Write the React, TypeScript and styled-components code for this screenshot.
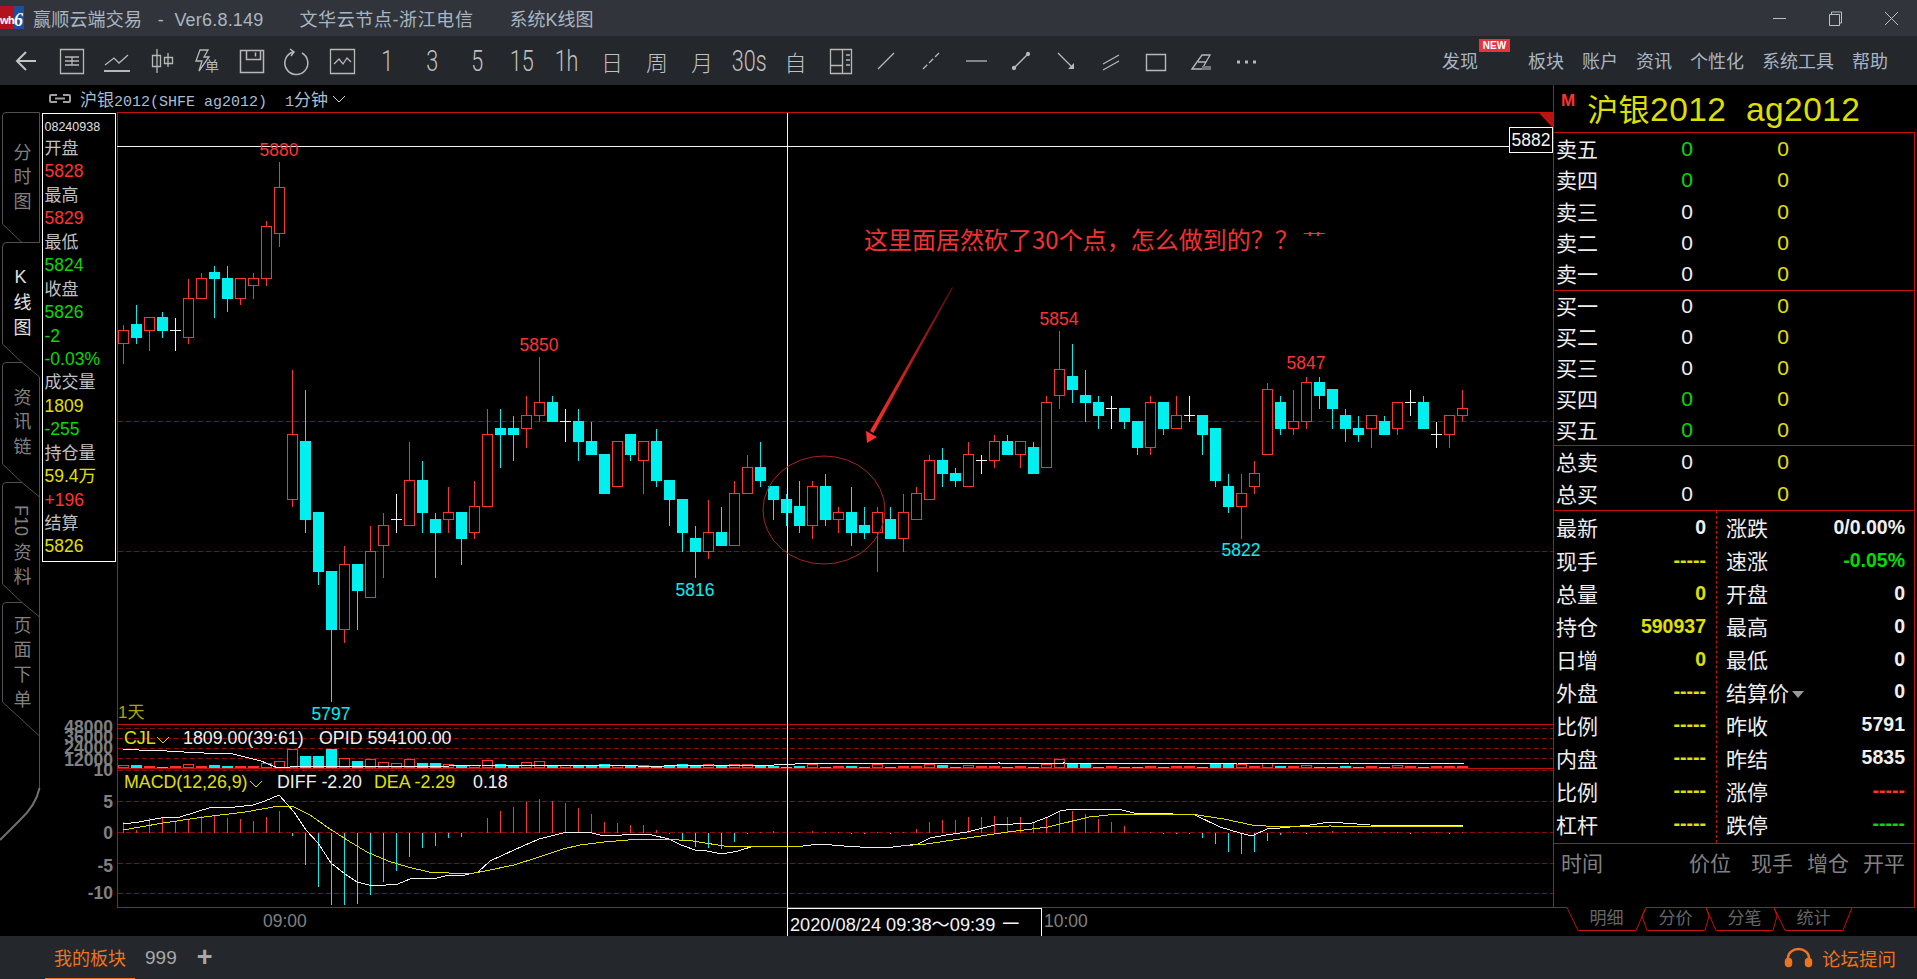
import React from 'react';
import styled, { createGlobalStyle } from 'styled-components';

const SANS = '"Liberation Sans", "Noto Sans CJK SC", sans-serif';
const RED = '#ff3232';
const CYAN = '#00f0f0';
const GREEN = '#00dc00';
const YELLOW = '#e0e000';
const FRAME = '#c4100c';
const GRID = '#8a0c0c';

type Tone = 'red' | 'green' | 'yellow' | 'white' | 'cyan' | 'gray';
const tones: Record<Tone, string> = {
  red: RED,
  green: GREEN,
  yellow: YELLOW,
  white: '#f0f0f0',
  cyan: CYAN,
  gray: '#808080',
};

const GlobalStyle = createGlobalStyle`
  html, body {
    margin: 0;
    height: 100%;
    background: #000;
    overflow: hidden;
    font-family: ${SANS};
  }
  #root {
    height: 100%;
  }
`;

const Screen = styled.div`
  display: flex;
  flex-direction: column;
  width: 1917px;
  height: 979px;
`;

const TitleBar = styled.header`
  display: flex;
  align-items: center;
  flex: 0 0 36px;
  background: #31353b;
  color: #a9b5c2;
  font-size: 18px;
`;

const Logo = styled.div`
  display: flex;
  align-items: flex-end;
  width: 24px;
  height: 23px;
  margin: 0 9px 1px 0;
  background: linear-gradient(90deg, #b3121c 0 60%, #1c4f9c 60%);
  color: #fff;
  font-weight: 700;
  line-height: 17px;
`;

const LogoWh = styled.span`
  font-size: 11px;
  letter-spacing: -0.6px;
`;

const LogoSix = styled.span`
  font-size: 18px;
  font-style: italic;
  font-family: "Liberation Serif", serif;
`;

const TitleGroup = styled.div`
  display: flex;
  gap: 36px;
  white-space: pre;
`;

const TitleVersion = styled.span`
  letter-spacing: 0.2px;
`;

const TitleNode = styled.span`
  letter-spacing: 0.6px;
`;

const WindowControls = styled.div`
  display: flex;
  gap: 41px;
  margin-left: auto;
  margin-right: 18px;
`;

const Toolbar = styled.nav`
  display: flex;
  align-items: center;
  flex: 0 0 49px;
  padding-left: 4.5px;
  background: #24272c;
`;

const ToolButton = styled.div`
  display: flex;
  align-items: center;
  justify-content: center;
  flex: 0 0 45px;
  height: 49px;
  color: #c0c0c0;
`;

const ToolGlyph = styled.span`
  display: inline-block;
  font-family: Roboto, "Noto Sans CJK SC", sans-serif;
  font-weight: 300;
  font-size: 30px;
  line-height: 30px;
  transform: scaleX(0.72);
  white-space: nowrap;
`;

const ToolGlyphCjk = styled.span`
  font-family: "Noto Sans CJK SC", sans-serif;
  font-weight: 200;
  font-size: 22px;
`;

const MainMenu = styled.div`
  display: flex;
  align-items: center;
  gap: 18px;
  margin-left: auto;
  margin-right: 29px;
  margin-top: -2px;
  color: #a9b5c2;
  font-size: 18px;
`;

const MenuItem = styled.span<{ $badge?: boolean }>`
  position: relative;
  padding-right: ${(p) => (p.$badge ? '32px' : '0')};
`;

const NewBadge = styled.span`
  position: absolute;
  left: 37px;
  top: -8px;
  width: 31px;
  height: 13px;
  background: #e8333f;
  color: #fff;
  font-size: 10px;
  font-weight: 700;
  line-height: 13px;
  text-align: center;
`;

const Main = styled.main`
  display: flex;
  flex: 1;
  min-height: 0;
  background: #000;
`;

const TabRail = styled.aside`
  position: relative;
  display: flex;
  flex-direction: column;
  flex: 0 0 41px;
  padding-top: 27px;
  box-sizing: border-box;
`;

const RailOutline = styled.svg`
  position: absolute;
  left: 0;
  top: 0;
`;

const RailTab = styled.div<{ $active?: boolean; $height: number }>`
  position: relative;
  display: flex;
  align-items: center;
  justify-content: center;
  width: 41px;
  height: ${(p) => p.$height}px;
  box-sizing: border-box;
  padding-top: 6.6px;
  color: ${(p) => (p.$active ? '#e0e0e0' : '#808080')};
  font-size: 18px;
  line-height: 18px;
  letter-spacing: 6.6px;
  writing-mode: vertical-rl;
  text-orientation: ${(p) => (p.$active ? 'upright' : 'mixed')};
`;

const RailLatin = styled.span`
  margin-bottom: 7px;
  letter-spacing: 0;
`;

const ChartColumn = styled.section`
  display: flex;
  flex-direction: column;
  flex: 0 0 1512px;
`;

const ContractRow = styled.div`
  display: flex;
  align-items: center;
  flex: 0 0 27px;
  padding-left: 7px;
  color: #a9bdd0;
  font-family: "Liberation Mono", "Noto Sans CJK SC", monospace;
  font-size: 15px;
`;

const ContractCjk = styled.span`
  font-family: "Noto Sans CJK SC", sans-serif;
  font-size: 17px;
`;

const ContractName = styled.span`
  margin-left: 8px;
`;

const ContractPeriod = styled.span`
  display: flex;
  align-items: center;
  margin-left: 18px;
  gap: 4px;
`;

const ChartStage = styled.div`
  position: relative;
  flex: 1;
`;

const ChartSvg = styled.svg`
  display: block;
`;

const DataWindow = styled.div`
  position: absolute;
  left: 1px;
  top: 1px;
  width: 74px;
  height: 449px;
  box-sizing: border-box;
  padding: 2px 0 0 1.5px;
  border: 1px solid #fff;
  background: #000;
`;

const DataStamp = styled.div`
  height: 21px;
  color: #e0e0e0;
  font-size: 12.5px;
  line-height: 23px;
`;

const DataRow = styled.div<{ $tone?: Tone }>`
  height: 23.45px;
  color: ${(p) => (p.$tone ? tones[p.$tone] : '#c0c0c0')};
  font-size: ${(p) => (p.$tone ? '17.5px' : '17px')};
  line-height: 23.45px;
  white-space: nowrap;
`;

const PriceTag = styled.div`
  position: absolute;
  right: 0;
  top: 15px;
  width: 44px;
  height: 26px;
  box-sizing: border-box;
  border: 1px solid #fff;
  background: #000;
  color: #f4f4f4;
  font-size: 17.5px;
  line-height: 24px;
  text-align: center;
`;

const DateTag = styled.div`
  position: absolute;
  left: 746px;
  top: 796px;
  display: flex;
  align-items: center;
  width: 255px;
  height: 28px;
  box-sizing: border-box;
  padding-left: 2px;
  border: 1px solid #fff;
  border-bottom: none;
  background: #000;
  color: #f4f4f4;
  font-size: 18.2px;
  white-space: pre;
`;

const DateArrow = styled.span`
  margin-left: 7px;
  font-size: 17px;
`;

const Mark = styled.text<{ $tone: Tone }>`
  fill: ${(p) => tones[p.$tone]};
  font-family: ${SANS};
  font-size: 17.5px;
  text-anchor: middle;
`;

const AxisLabel = styled.text`
  fill: #808080;
  font-family: ${SANS};
  font-size: 17.5px;
  font-weight: 700;
  text-anchor: end;
`;

const LegendText = styled.text<{ $tone: Tone }>`
  fill: ${(p) => tones[p.$tone]};
  font-family: ${SANS};
  font-size: 17.8px;
`;

const TimeLabel = styled.text`
  fill: #808080;
  font-family: ${SANS};
  font-size: 17.5px;
`;

const Annotation = styled.text`
  fill: #f03232;
  font-family: "Noto Sans CJK SC", sans-serif;
  font-size: 24px;
`;

const PeriodLabel = styled.text`
  fill: #a8a800;
  font-family: ${SANS};
  font-size: 17px;
`;

const QuotePanel = styled.aside`
  display: flex;
  flex-direction: column;
  flex: 0 0 364px;
  box-sizing: border-box;
  padding-right: 2px;
  padding-bottom: 5px;
`;

const QuoteHeader = styled.div`
  display: flex;
  flex: 0 0 47px;
  box-sizing: border-box;
  padding-top: 4px;
  border-left: 1px solid ${FRAME};
`;

const MarketFlag = styled.span`
  margin: 3px 12px 0 7px;
  color: ${RED};
  font-size: 17px;
  font-weight: 700;
  line-height: 17px;
`;

const QuoteTitle = styled.span`
  color: #dede00;
  font-size: 33.5px;
  letter-spacing: 0.45px;
  line-height: 42px;
  white-space: pre;
`;

const QuoteTitleCjk = styled.span`
  font-size: 31px;
`;

const QuoteBody = styled.div`
  display: flex;
  flex-direction: column;
  height: 775px;
  box-sizing: border-box;
  border: 1px solid ${FRAME};
  border-bottom: none;
  color: #eee;
`;

const OrderSection = styled.div<{ $height: number }>`
  display: flex;
  flex-direction: column;
  flex: 0 0 ${(p) => p.$height}px;
  box-sizing: border-box;
  border-bottom: 1px solid ${FRAME};
`;

const OrderRow = styled.div`
  display: grid;
  grid-template-columns: 118px 26px 70px 26px;
  align-items: center;
  flex: 1;
  padding-left: 2px;
  font-size: 21px;
`;

const OrderLabel = styled.span`
  position: relative;
  top: -1px;
`;

const OrderValue = styled.span<{ $tone: Tone }>`
  color: ${(p) => tones[p.$tone]};
  text-align: center;
`;

const Stats = styled.div`
  display: grid;
  grid-template-columns: 163px 1fr;
  flex: 0 0 333px;
  box-sizing: border-box;
  border-bottom: 1px solid ${FRAME};
`;

const StatsColumn = styled.div<{ $left?: boolean }>`
  display: flex;
  flex-direction: column;
  padding: ${(p) => (p.$left ? '0 10px 3px 2px' : '0 9px 3px 9px')};
  border-right: ${(p) => (p.$left ? `1px dashed ${FRAME}` : 'none')};
`;

const StatRow = styled.div`
  display: flex;
  align-items: center;
  justify-content: space-between;
  flex: 1;
  font-size: 21px;
`;

const StatLabel = styled.span`
  display: flex;
  align-items: center;
`;

const StatValue = styled.span<{ $tone: Tone }>`
  color: ${(p) => tones[p.$tone]};
  font-size: 19.5px;
  font-weight: 700;
`;

const Caret = styled.i`
  width: 0;
  height: 0;
  margin: 6px 0 0 3px;
  border-left: 6.5px solid transparent;
  border-right: 6.5px solid transparent;
  border-top: 7px solid #999;
`;

const TradeHeader = styled.div`
  display: flex;
  flex: 1;
  align-items: flex-start;
  padding: 3px 9px 0 7px;
  color: #808080;
  font-size: 21px;
`;

const TradeTime = styled.span`
  margin-right: auto;
`;

const TradeCell = styled.span<{ $gap: number }>`
  margin-left: ${(p) => p.$gap}px;
`;

const BookTabs = styled.div`
  position: relative;
  display: flex;
  flex: 0 0 24px;
  padding-left: 19px;
`;

const BookOutline = styled.svg`
  position: absolute;
  left: 0;
  top: 0;
`;

const BookTab = styled.span`
  position: relative;
  flex: 0 0 69px;
  color: #666;
  font-size: 17px;
  line-height: 23px;
  text-align: center;
`;

const StatusBar = styled.footer`
  display: flex;
  align-items: center;
  flex: 0 0 43px;
  background: #24272c;
  color: #a8a8a8;
  font-size: 18px;
`;

const BoardTab = styled.span`
  display: flex;
  align-items: center;
  justify-content: center;
  width: 90px;
  height: 41px;
  margin-left: 45px;
  border-bottom: 1px solid #ee7420;
  color: #ee7420;
`;

const BoardCount = styled.span`
  margin-left: 10px;
  font-size: 19px;
`;

const BoardAdd = styled.span`
  margin-left: 20px;
  font-size: 27px;
  font-weight: 700;
  line-height: 27px;
`;

const ForumLink = styled.span`
  display: flex;
  align-items: center;
  gap: 9px;
  margin-left: auto;
  margin-right: 21px;
  color: #ee7420;
  font-size: 18.5px;
`;

type Kind = 'r' | 'c' | 'w';
type Candle = [Kind, number, number, number, number];

// kind, body top, body bottom, high, low
const candles: Candle[] = [
  ['r', 5854, 5852, 5855, 5849], ['c', 5855, 5853, 5858, 5852], ['r', 5856, 5854, 5856, 5851],
  ['c', 5856, 5854, 5857, 5853], ['w', 5854, 5854, 5856, 5851], ['r', 5859, 5853, 5862, 5852],
  ['r', 5862, 5859, 5863, 5859], ['c', 5863, 5862, 5864, 5856], ['c', 5862, 5859, 5864, 5857],
  ['r', 5862, 5859, 5862, 5858], ['r', 5862, 5861, 5863, 5859], ['r', 5870, 5862, 5871, 5861],
  ['r', 5876, 5869, 5880, 5867], ['r', 5838, 5828, 5848, 5827], ['c', 5837, 5825, 5845, 5823],
  ['c', 5826, 5817, 5826, 5815], ['c', 5817, 5808, 5817, 5797], ['r', 5818, 5808, 5821, 5806],
  ['c', 5818, 5814, 5818, 5808], ['r', 5820, 5813, 5824, 5813], ['r', 5824, 5821, 5826, 5816],
  ['w', 5825, 5825, 5829, 5823], ['r', 5831, 5824, 5837, 5824], ['c', 5831, 5826, 5834, 5823],
  ['c', 5825, 5823, 5826, 5816], ['r', 5826, 5825, 5830, 5823], ['c', 5826, 5822, 5826, 5818],
  ['r', 5827, 5823, 5831, 5822], ['r', 5838, 5827, 5842, 5827], ['c', 5839, 5838, 5842, 5833],
  ['c', 5839, 5838, 5841, 5834], ['r', 5841, 5839, 5844, 5836], ['r', 5843, 5841, 5850, 5840],
  ['c', 5843, 5840, 5844, 5840], ['w', 5840, 5840, 5842, 5837], ['c', 5840, 5837, 5842, 5834],
  ['c', 5837, 5835, 5840, 5835], ['c', 5835, 5829, 5835, 5829], ['r', 5837, 5830, 5837, 5830],
  ['c', 5838, 5835, 5838, 5834], ['r', 5837, 5834, 5837, 5829], ['c', 5837, 5831, 5839, 5830],
  ['c', 5831, 5828, 5831, 5824], ['c', 5828, 5823, 5828, 5820], ['c', 5822, 5820, 5824, 5816],
  ['r', 5823, 5820, 5828, 5819], ['c', 5823, 5821, 5827, 5821], ['r', 5829, 5821, 5831, 5821],
  ['r', 5833, 5829, 5835, 5829], ['c', 5833, 5831, 5837, 5830], ['c', 5830, 5828, 5830, 5825],
  ['c', 5828, 5826, 5829, 5824], ['c', 5827, 5824, 5831, 5823], ['r', 5830, 5824, 5831, 5822],
  ['c', 5830, 5825, 5832, 5824], ['r', 5826, 5825, 5827, 5823], ['c', 5826, 5823, 5830, 5821],
  ['c', 5824, 5823, 5827, 5822], ['r', 5826, 5823, 5827, 5817], ['c', 5825, 5822, 5827, 5822],
  ['r', 5826, 5822, 5829, 5820], ['r', 5829, 5825, 5830, 5825], ['r', 5834, 5828, 5835, 5828],
  ['c', 5834, 5832, 5836, 5830], ['c', 5832, 5831, 5833, 5830], ['r', 5835, 5830, 5837, 5830],
  ['w', 5834, 5834, 5835, 5832], ['r', 5837, 5834, 5838, 5833], ['c', 5837, 5835, 5838, 5835],
  ['r', 5837, 5835, 5837, 5833], ['c', 5836, 5832, 5837, 5832], ['r', 5843, 5833, 5844, 5833],
  ['r', 5848, 5844, 5854, 5842], ['c', 5847, 5845, 5852, 5843], ['c', 5844, 5843, 5848, 5840],
  ['c', 5843, 5841, 5844, 5839], ['w', 5842, 5842, 5844, 5839], ['c', 5842, 5840, 5842, 5839],
  ['c', 5840, 5836, 5840, 5835], ['r', 5843, 5836, 5844, 5835], ['c', 5843, 5839, 5843, 5838],
  ['r', 5841, 5839, 5844, 5839], ['w', 5841, 5841, 5844, 5840], ['c', 5841, 5838, 5841, 5835],
  ['c', 5839, 5831, 5839, 5830], ['c', 5830, 5827, 5832, 5826], ['r', 5829, 5827, 5832, 5822],
  ['r', 5832, 5830, 5834, 5829], ['r', 5845, 5835, 5846, 5835], ['c', 5843, 5839, 5844, 5838],
  ['r', 5840, 5839, 5845, 5838], ['r', 5846, 5840, 5847, 5839], ['c', 5846, 5844, 5847, 5842],
  ['c', 5845, 5842, 5845, 5839], ['c', 5841, 5839, 5842, 5837], ['c', 5839, 5838, 5841, 5837],
  ['r', 5841, 5839, 5841, 5836], ['c', 5840, 5838, 5841, 5838], ['r', 5843, 5839, 5843, 5838],
  ['w', 5843, 5843, 5845, 5841], ['c', 5843, 5839, 5844, 5839], ['w', 5838, 5838, 5840, 5836],
  ['r', 5841, 5838, 5841, 5836], ['r', 5842, 5841, 5845, 5840],
];

const volumes = [
  2, 3, 1, 1, 1, 3, 1, 3, 2, 1, 1, 4, 6, 18, 12, 12, 19, 9, 7, 8, 5, 4, 8, 5, 5, 3, 3, 2, 7, 4, 3, 5, 6, 3, 2, 3,
  3, 4, 2, 2, 2, 2, 3, 4, 3, 3, 3, 3, 3, 2, 2, 1, 2, 3, 1, 1, 2, 1, 3, 1, 1, 1, 3, 3, 1, 2, 1, 1, 1, 1, 1, 3, 8, 4,
  4, 1, 1, 1, 1, 1, 1, 1, 1, 1, 4, 4, 3, 1, 4, 2, 1, 2, 1, 1, 2, 1, 1, 1, 2, 1, 1, 1, 1, 1,
];

const macdBars = [
  11, 3, 15, 15, 12, 14, 17, 18, 15, 14, 12, 16, 22, -3, -32, -54, -72, -72, -71, -62, -49, -38, -24, -15, -13, -5,
  -4, 0, 15, 22, 26, 31, 34, 32, 30, 25, 19, 11, 10, 8, 8, 3, -1, -8, -14, -15, -16, -9, -1, 1, 2, 0, 1, 2, 1, 1, -1,
  -1, 1, -1, 1, 4, 11, 13, 13, 16, 16, 17, 16, 16, 11, 16, 22, 22, 19, 14, 11, 7, 1, 1, -1, -1, -1, -5, -11, -19, -21,
  -19, -8, -2, 1, -1, 1, 2, 1, 1, 1, 1, 1, -1, 1, 1, -1, 1,
];

const candleX = (i: number) => 123.5 + 13 * i;
const priceY = (p: number) => Math.round(421 + (5840 - p) * 6.5) + 0.5;

// traced line points, page x / y
const opidLine =
  '123,749 139,750 167,751 184,752 204,753 233,754 245,757 261,761 273,766 278,768 302,766 449,766 482,765 510,765 ' +
  '572,765 636,765 640,767 664,766 681,765 701,766 713,765 754,766 795,764 895,763 921,763 922,763 934,764 999,763 ' +
  '1032,764 1064,763 1118,764 1142,763 1207,763 1237,763 1277,764 1350,763 1464,764';
const diffLine =
  '123,824 139,822 161,818 180,817 212,807 235,807 253,805 265,801 279,795 294,812 306,830 318,843 331,863 345,874 ' +
  '357,882 369,885 386,885 398,884 410,879 437,878 449,875 465,875 478,872 490,861 514,850 539,839 563,833 580,832 ' +
  '592,833 604,836 640,834 652,835 669,839 681,845 695,850 707,851 722,854 738,851 754,846 803,846 820,844 844,846 ' +
  '860,847 893,847 918,844 930,838 946,835 967,832 995,825 1032,823 1048,817 1060,811 1073,809 1118,809 1134,813 ' +
  '1150,813 1195,815 1220,827 1240,833 1252,836 1267,829 1280,828 1310,825 1330,822 1370,825 1420,826 1464,825';
const deaLine =
  '123,830 163,823 204,817 245,812 279,806 294,807 310,815 327,827 347,840 367,852 388,861 408,867 429,872 449,873 ' +
  '469,874 490,870 514,865 539,857 563,849 580,845 604,842 640,839 664,839 693,841 730,847 803,846 901,846 926,844 ' +
  '967,838 1008,832 1048,827 1089,817 1118,814 1191,814 1224,819 1252,825 1280,827 1330,826 1400,827 1464,826';

const Candles: React.FC = () => (
  <g shapeRendering="crispEdges">
    {candles.map(([kind, top, bottom, high, low], i) => {
      const x = candleX(i);
      const color = kind === 'r' ? RED : kind === 'c' ? CYAN : '#f0f0f0';
      const yTop = priceY(top);
      const yBottom = priceY(bottom);
      return (
        <g key={i}>
          <line x1={x} x2={x} y1={priceY(high)} y2={priceY(low)} stroke={color} />
          {kind === 'r' && <rect x={x - 5} y={yTop} width={10} height={yBottom - yTop} fill="#000" stroke={color} />}
          {kind === 'c' && <rect x={x - 5.5} y={yTop - 0.5} width={11} height={yBottom - yTop + 1} fill={color} />}
          {kind === 'w' && <line x1={x - 5.5} x2={x + 5.5} y1={yTop} y2={yTop} stroke={color} />}
        </g>
      );
    })}
  </g>
);

const VolumeBars: React.FC = () => (
  <g shapeRendering="crispEdges">
    {volumes.map((h, i) => {
      const x = candleX(i);
      const kind = candles[i][0];
      return kind === 'c' ? (
        <rect key={i} x={x - 5.5} y={768 - h} width={11} height={h} fill={CYAN} />
      ) : (
        <rect key={i} x={x - 5} y={767.5 - h} width={10} height={h} fill="#000" stroke={RED} />
      );
    })}
  </g>
);

const MacdBars: React.FC = () => (
  <g shapeRendering="crispEdges">
    {macdBars.map((h, i) => (
      <line key={i} x1={candleX(i)} x2={candleX(i)} y1={832.5} y2={832.5 - h} stroke={h > 0 ? RED : CYAN} />
    ))}
  </g>
);

const Chevron: React.FC<{ x: number; y: number; color: string }> = ({ x, y, color }) => (
  <polyline points={`${x},${y} ${x + 6},${y + 6} ${x + 12},${y}`} fill="none" stroke={color} />
);

const PriceChart: React.FC = () => (
  <ChartSvg width={1512} height={824} viewBox="41 112 1512 824">
    <defs>
      <linearGradient id="arrowFade" x1="952" y1="287" x2="868" y2="442" gradientUnits="userSpaceOnUse">
        <stop offset="0" stopColor="#5a0c0c" />
        <stop offset="0.55" stopColor="#c02020" />
        <stop offset="1" stopColor="#ff3232" />
      </linearGradient>
    </defs>
    <g shapeRendering="crispEdges" stroke={GRID} strokeDasharray="5 3">
      {[421.5, 551.5, 728.5, 738.5, 748.5, 758.5, 770.5, 801.5, 832.5, 863.5, 893.5].map((y) => (
        <line key={y} x1={118} x2={1553} y1={y} y2={y} />
      ))}
    </g>
    <Candles />
    <VolumeBars />
    <MacdBars />
    <g shapeRendering="crispEdges" fill="none" strokeWidth={1}>
      <polyline points={opidLine} stroke="#f0f0f0" />
      <polyline points={diffLine} stroke="#f0f0f0" />
      <polyline points={deaLine} stroke={YELLOW} />
    </g>
    <g shapeRendering="crispEdges" stroke={FRAME}>
      <line x1={117} x2={1553} y1={112.5} y2={112.5} />
      <line x1={117.5} x2={117.5} y1={112} y2={907} />
      <line x1={117} x2={1553} y1={724.5} y2={724.5} />
      <line x1={117} x2={1553} y1={768.5} y2={768.5} />
      <line x1={117} x2={1553} y1={907.5} y2={907.5} />
    </g>
    <polygon points="1539,113 1553,113 1553,128" fill="#b81410" />
    <g shapeRendering="crispEdges" stroke="#f4f4f4">
      <line x1={787.5} x2={787.5} y1={113} y2={936} />
      <line x1={117} x2={1510} y1={146.5} y2={146.5} />
    </g>
    <ellipse cx={824} cy={510} rx={61} ry={54} fill="none" stroke="#a82424" />
    <polygon points="952,287 953,288 873.5,433 870,431" fill="url(#arrowFade)" />
    <polygon points="867,443 866,431 877,437" fill={RED} />
    <Annotation x={864} y={249}>这里面居然砍了30个点，怎么做到的？？</Annotation>
    <Annotation x={1302} y={484} transform="scale(1 0.5)">艹</Annotation>
    <Mark $tone="red" x={279} y={156}>5880</Mark>
    <Mark $tone="red" x={539} y={351}>5850</Mark>
    <Mark $tone="red" x={1059} y={325}>5854</Mark>
    <Mark $tone="red" x={1306} y={369}>5847</Mark>
    <Mark $tone="cyan" x={695} y={596}>5816</Mark>
    <Mark $tone="cyan" x={331} y={720}>5797</Mark>
    <Mark $tone="cyan" x={1241} y={556}>5822</Mark>
    <PeriodLabel x={118} y={718}>1天</PeriodLabel>
    <AxisLabel x={113} y={733}>48000</AxisLabel>
    <AxisLabel x={113} y={743}>36000</AxisLabel>
    <AxisLabel x={113} y={754}>24000</AxisLabel>
    <AxisLabel x={113} y={766}>12000</AxisLabel>
    <AxisLabel x={113} y={776}>10</AxisLabel>
    <AxisLabel x={113} y={808}>5</AxisLabel>
    <AxisLabel x={113} y={839}>0</AxisLabel>
    <AxisLabel x={113} y={872}>-5</AxisLabel>
    <AxisLabel x={113} y={899}>-10</AxisLabel>
    <LegendText $tone="yellow" x={124} y={744}>CJL</LegendText>
    <Chevron x={157} y={737} color={YELLOW} />
    <LegendText $tone="white" x={183} y={744}>1809.00(39:61)</LegendText>
    <LegendText $tone="white" x={319} y={744}>OPID 594100.00</LegendText>
    <LegendText $tone="yellow" x={124} y={788}>MACD(12,26,9)</LegendText>
    <Chevron x={250} y={781} color={YELLOW} />
    <LegendText $tone="white" x={277} y={788}>DIFF -2.20</LegendText>
    <LegendText $tone="yellow" x={374} y={788}>DEA -2.29</LegendText>
    <LegendText $tone="white" x={473} y={788}>0.18</LegendText>
    <TimeLabel x={263} y={927}>09:00</TimeLabel>
    <TimeLabel x={1044} y={927}>10:00</TimeLabel>
  </ChartSvg>
);

const Icon: React.FC<{ children: React.ReactNode }> = ({ children }) => (
  <svg width={30} height={30} viewBox="0 0 30 30" fill="none" stroke="#b8b8b8" strokeWidth={1.3}>
    {children}
  </svg>
);

const toolbarItems: React.ReactNode[] = [
  <Icon key="back"><path d="M24 15H6M14 6l-9 9 9 9" strokeWidth={2} stroke="#c4c4c4" /></Icon>,
  <Icon key="table"><path d="M3.500 3.500h23v24h-23zM8 11h14M8 15h14M8 19h14M15 11v8" /></Icon>,
  <Icon key="line"><path d="M2 25h26" strokeWidth={2} /><path d="M3 19l9-7 5 5 9-8" /></Icon>,
  <Icon key="candle"><path d="M10 3v24M5.500 9.500h8v11h-8zM21 7v14M17.500 11.500h8v6h-8z" /></Icon>,
  <Icon key="flash">
    <path d="M8 4h8l-4 7h5L7 25l3-10H4z" />
    <text x={13} y={25} fill="#b8b8b8" stroke="none" fontSize={14} fontFamily="Noto Sans CJK SC, sans-serif">单</text>
  </Icon>,
  <Icon key="save"><path d="M3.500 4.500h23v22h-23zM9.500 4.500v9h14v-9M18.500 6.500v4" strokeWidth={1.5} /></Icon>,
  <Icon key="refresh"><path d="M11 6a11.500 11.500 0 1 0 9 1M8 3l4 3-3 4" strokeWidth={1.5} /></Icon>,
  <Icon key="chart"><path d="M3.500 3.500h24v24h-24zM7 18l5-5 4 5 4-6 4 4" /></Icon>,
  <ToolGlyph key="1">1</ToolGlyph>,
  <ToolGlyph key="3">3</ToolGlyph>,
  <ToolGlyph key="5">5</ToolGlyph>,
  <ToolGlyph key="15">15</ToolGlyph>,
  <ToolGlyph key="1h">1h</ToolGlyph>,
  <ToolGlyphCjk key="day">日</ToolGlyphCjk>,
  <ToolGlyphCjk key="week">周</ToolGlyphCjk>,
  <ToolGlyphCjk key="month">月</ToolGlyphCjk>,
  <ToolGlyph key="30s">30s</ToolGlyph>,
  <ToolGlyphCjk key="auto">自</ToolGlyphCjk>,
  <Icon key="layout"><path d="M4.500 3.500h21v24h-21zM16.500 3.500v24M4.500 19.500h12M20 9h4M20 14h4M20 19h4" /></Icon>,
  <Icon key="segment"><path d="M7 23L23 7" /></Icon>,
  <Icon key="dash"><path d="M7 23L23 7" strokeDasharray="6 2.500" /></Icon>,
  <Icon key="hline"><path d="M5 15h21" /></Icon>,
  <Icon key="ray"><path d="M8 22L22 8" /><circle cx={8} cy={22} r={1.500} fill="#b8b8b8" /><circle cx={22} cy={8} r={1.500} fill="#b8b8b8" /></Icon>,
  <Icon key="arrow"><path d="M7 7l14 14" /><path d="M17 23h6v-6z" fill="#b8b8b8" stroke="none" /></Icon>,
  <Icon key="parallel"><path d="M7 18L23 9M7 24L23 15" /></Icon>,
  <Icon key="rect"><path d="M5.500 8.500h19v16h-19z" strokeWidth={1.400} /></Icon>,
  <Icon key="eraser">
    <path d="M6 23l10-14h8l-8 14zM6 23h10M12 16l8 0" />
    <path d="M16 20h9v4H16z" fill="#777" stroke="none" />
  </Icon>,
  <Icon key="more"><path d="M6 16h3M14 16h3M22 16h3" strokeWidth={3} /></Icon>,
];

const menuItems = ['板块', '账户', '资讯', '个性化', '系统工具', '帮助'];

const railTabs: { key: string; label: React.ReactNode; height: number; active?: boolean }[] = [
  { key: 'minute', label: '分时图', height: 130 },
  { key: 'kline', label: 'K线图', height: 120, active: true },
  { key: 'news', label: '资讯链', height: 120 },
  { key: 'f10', label: <><RailLatin>F10</RailLatin>资料</>, height: 126 },
  { key: 'order', label: '页面下单', height: 108 },
];

const dataRows: { text: string; tone?: Tone }[] = [
  { text: '开盘' },
  { text: '5828', tone: 'red' },
  { text: '最高' },
  { text: '5829', tone: 'red' },
  { text: '最低' },
  { text: '5824', tone: 'green' },
  { text: '收盘' },
  { text: '5826', tone: 'green' },
  { text: '-2', tone: 'green' },
  { text: '-0.03%', tone: 'green' },
  { text: '成交量' },
  { text: '1809', tone: 'yellow' },
  { text: '-255', tone: 'green' },
  { text: '持仓量' },
  { text: '59.4万', tone: 'yellow' },
  { text: '+196', tone: 'red' },
  { text: '结算' },
  { text: '5826', tone: 'yellow' },
];

const asks: [string, Tone][] = [['卖五', 'green'], ['卖四', 'green'], ['卖三', 'white'], ['卖二', 'white'], ['卖一', 'white']];
const bids: [string, Tone][] = [['买一', 'white'], ['买二', 'white'], ['买三', 'white'], ['买四', 'green'], ['买五', 'green']];
const totals: [string, Tone][] = [['总卖', 'white'], ['总买', 'white']];

const leftStats: [string, string, Tone][] = [
  ['最新', '0', 'white'],
  ['现手', '-----', 'yellow'],
  ['总量', '0', 'yellow'],
  ['持仓', '590937', 'yellow'],
  ['日增', '0', 'yellow'],
  ['外盘', '-----', 'yellow'],
  ['比例', '-----', 'yellow'],
  ['内盘', '-----', 'yellow'],
  ['比例', '-----', 'yellow'],
  ['杠杆', '-----', 'yellow'],
];

const rightStats: [string, string, Tone][] = [
  ['涨跌', '0/0.00%', 'white'],
  ['速涨', '-0.05%', 'green'],
  ['开盘', '0', 'white'],
  ['最高', '0', 'white'],
  ['最低', '0', 'white'],
  ['结算价', '0', 'white'],
  ['昨收', '5791', 'white'],
  ['昨结', '5835', 'white'],
  ['涨停', '-----', 'red'],
  ['跌停', '-----', 'green'],
];

const OrderRows: React.FC<{ rows: [string, Tone][] }> = ({ rows }) => (
  <>
    {rows.map(([label, tone]) => (
      <OrderRow key={label}>
        <OrderLabel>{label}</OrderLabel>
        <OrderValue $tone={tone}>0</OrderValue>
        <span />
        <OrderValue $tone="yellow">0</OrderValue>
      </OrderRow>
    ))}
  </>
);

const App: React.FC = () => (
  <>
    <GlobalStyle />
    <Screen>
      <TitleBar>
        <Logo>
          <LogoWh>wh</LogoWh>
          <LogoSix>6</LogoSix>
        </Logo>
        <TitleGroup>
          <TitleVersion>赢顺云端交易   -  Ver6.8.149</TitleVersion>
          <TitleNode>文华云节点-浙江电信</TitleNode>
          <span>系统K线图</span>
        </TitleGroup>
        <WindowControls>
          <svg width={15} height={15} viewBox="0 0 15 15" stroke="#b8c0c8" fill="none">
            <path d="M1 7.500h13" />
          </svg>
          <svg width={15} height={15} viewBox="0 0 15 15" stroke="#b8c0c8" fill="none">
            <path d="M1.500 3.500h10v11h-10zM3.500 3.500v-2.500h10v11h-2" />
          </svg>
          <svg width={15} height={15} viewBox="0 0 15 15" stroke="#b8c0c8" fill="none">
            <path d="M1 1l13 13M14 1L1 14" />
          </svg>
        </WindowControls>
      </TitleBar>

      <Toolbar>
        {toolbarItems.map((item, i) => (
          <ToolButton key={i}>{item}</ToolButton>
        ))}
        <MainMenu>
          <MenuItem $badge>
            发现
            <NewBadge>NEW</NewBadge>
          </MenuItem>
          {menuItems.map((name) => (
            <MenuItem key={name}>{name}</MenuItem>
          ))}
        </MainMenu>
      </Toolbar>

      <Main>
        <TabRail>
          <RailOutline width={41} height={851} viewBox="0 85 41 851" fill="none" stroke="#505050">
            <path d="M2.500 116Q2.500 112.500 6 112.500H39.500V242.500H22L2.500 224V116" />
            <path d="M39.500 242.500H6Q2.500 243 2.500 247V344L22 362.500H6Q2.500 362.500 2.500 366V464L22 482.500H6Q2.500 482.500 2.500 486V584L22 602.500H6Q2.500 602.500 2.500 606V702L39.500 736" />
            <path d="M22 362.500L39.500 377V788" />
            <path d="M22 482.500L39.500 497M22 602.500L39.500 617" />
            <path d="M39.500 788Q36 805 20 820L0 840" stroke="#707070" strokeWidth={2} />
          </RailOutline>
          {railTabs.map((tab) => (
            <RailTab key={tab.key} $active={tab.active} $height={tab.height}>
              {tab.label}
            </RailTab>
          ))}
        </TabRail>

        <ChartColumn>
          <ContractRow>
            <svg width={24} height={12} viewBox="0 0 24 12" fill="none" stroke="#a0a0a0" strokeWidth={2}>
              <path d="M9 2H3a1 1 0 0 0-1 1v5a1 1 0 0 0 1 1h6M15 2h6a1 1 0 0 1 1 1v5a1 1 0 0 1-1 1h-6M7 5.500h10" />
            </svg>
            <ContractName>
              <ContractCjk>沪银</ContractCjk>2012(SHFE ag2012)
            </ContractName>
            <ContractPeriod>
              <span>
                1<ContractCjk>分钟</ContractCjk>
              </span>
              <svg width={14} height={8} viewBox="0 0 14 8" fill="none" stroke="#c8d4e0">
                <path d="M1 1l6 6 6-6" />
              </svg>
            </ContractPeriod>
          </ContractRow>
          <ChartStage>
            <PriceChart />
            <DataWindow>
              <DataStamp>08240938</DataStamp>
              {dataRows.map((row, i) => (
                <DataRow key={i} $tone={row.tone}>
                  {row.text}
                </DataRow>
              ))}
            </DataWindow>
            <PriceTag>5882</PriceTag>
            <DateTag>
              2020/08/24 09:38～09:39
              <DateArrow>一</DateArrow>
            </DateTag>
          </ChartStage>
        </ChartColumn>

        <QuotePanel>
          <QuoteHeader>
            <MarketFlag>M</MarketFlag>
            <QuoteTitle>
              <QuoteTitleCjk>沪银</QuoteTitleCjk>2012  ag2012
            </QuoteTitle>
          </QuoteHeader>
          <QuoteBody>
            <OrderSection $height={158}>
              <OrderRows rows={asks} />
            </OrderSection>
            <OrderSection $height={155}>
              <OrderRows rows={bids} />
            </OrderSection>
            <OrderSection $height={65}>
              <OrderRows rows={totals} />
            </OrderSection>
            <Stats>
              <StatsColumn $left>
                {leftStats.map(([label, value, tone], i) => (
                  <StatRow key={i}>
                    <StatLabel>{label}</StatLabel>
                    <StatValue $tone={tone}>{value}</StatValue>
                  </StatRow>
                ))}
              </StatsColumn>
              <StatsColumn>
                {rightStats.map(([label, value, tone]) => (
                  <StatRow key={label}>
                    <StatLabel>
                      {label}
                      {label === '结算价' && <Caret />}
                    </StatLabel>
                    <StatValue $tone={tone}>{value}</StatValue>
                  </StatRow>
                ))}
              </StatsColumn>
            </Stats>
            <TradeHeader>
              <TradeTime>时间</TradeTime>
              <TradeCell $gap={0}>价位</TradeCell>
              <TradeCell $gap={20}>现手</TradeCell>
              <TradeCell $gap={14}>增仓</TradeCell>
              <TradeCell $gap={14}>开平</TradeCell>
            </TradeHeader>
          </QuoteBody>
          <BookTabs>
            <BookOutline width={362} height={24} viewBox="1553 907 362 24" fill="none" stroke={FRAME}>
              <path d="M1553 907.500H1567L1578 930.500H1636L1646 907.500H1915" />
              <path d="M1646 907.500L1642 916L1647 930.500H1705L1709 916L1706 907.500" />
              <path d="M1706 907.500L1716 930.500H1773L1777 916L1774 907.500" />
              <path d="M1774 907.500L1785 930.500H1843L1852 907.500" />
            </BookOutline>
            <BookTab>明细</BookTab>
            <BookTab>分价</BookTab>
            <BookTab>分笔</BookTab>
            <BookTab>统计</BookTab>
          </BookTabs>
        </QuotePanel>
      </Main>

      <StatusBar>
        <BoardTab>我的板块</BoardTab>
        <BoardCount>999</BoardCount>
        <BoardAdd>+</BoardAdd>
        <ForumLink>
          <svg width={29} height={21} viewBox="0 0 29 21" fill="none" stroke="#ee7420" strokeWidth={2.5}>
            <path d="M4 14V11a10.500 9 0 0 1 21 0v3" />
            <rect x={2} y={12} width={5} height={7} rx={2.500} fill="#ee7420" />
            <rect x={22} y={12} width={5} height={7} rx={2.500} fill="#ee7420" />
          </svg>
          论坛提问
        </ForumLink>
      </StatusBar>
    </Screen>
  </>
);

export default App;
